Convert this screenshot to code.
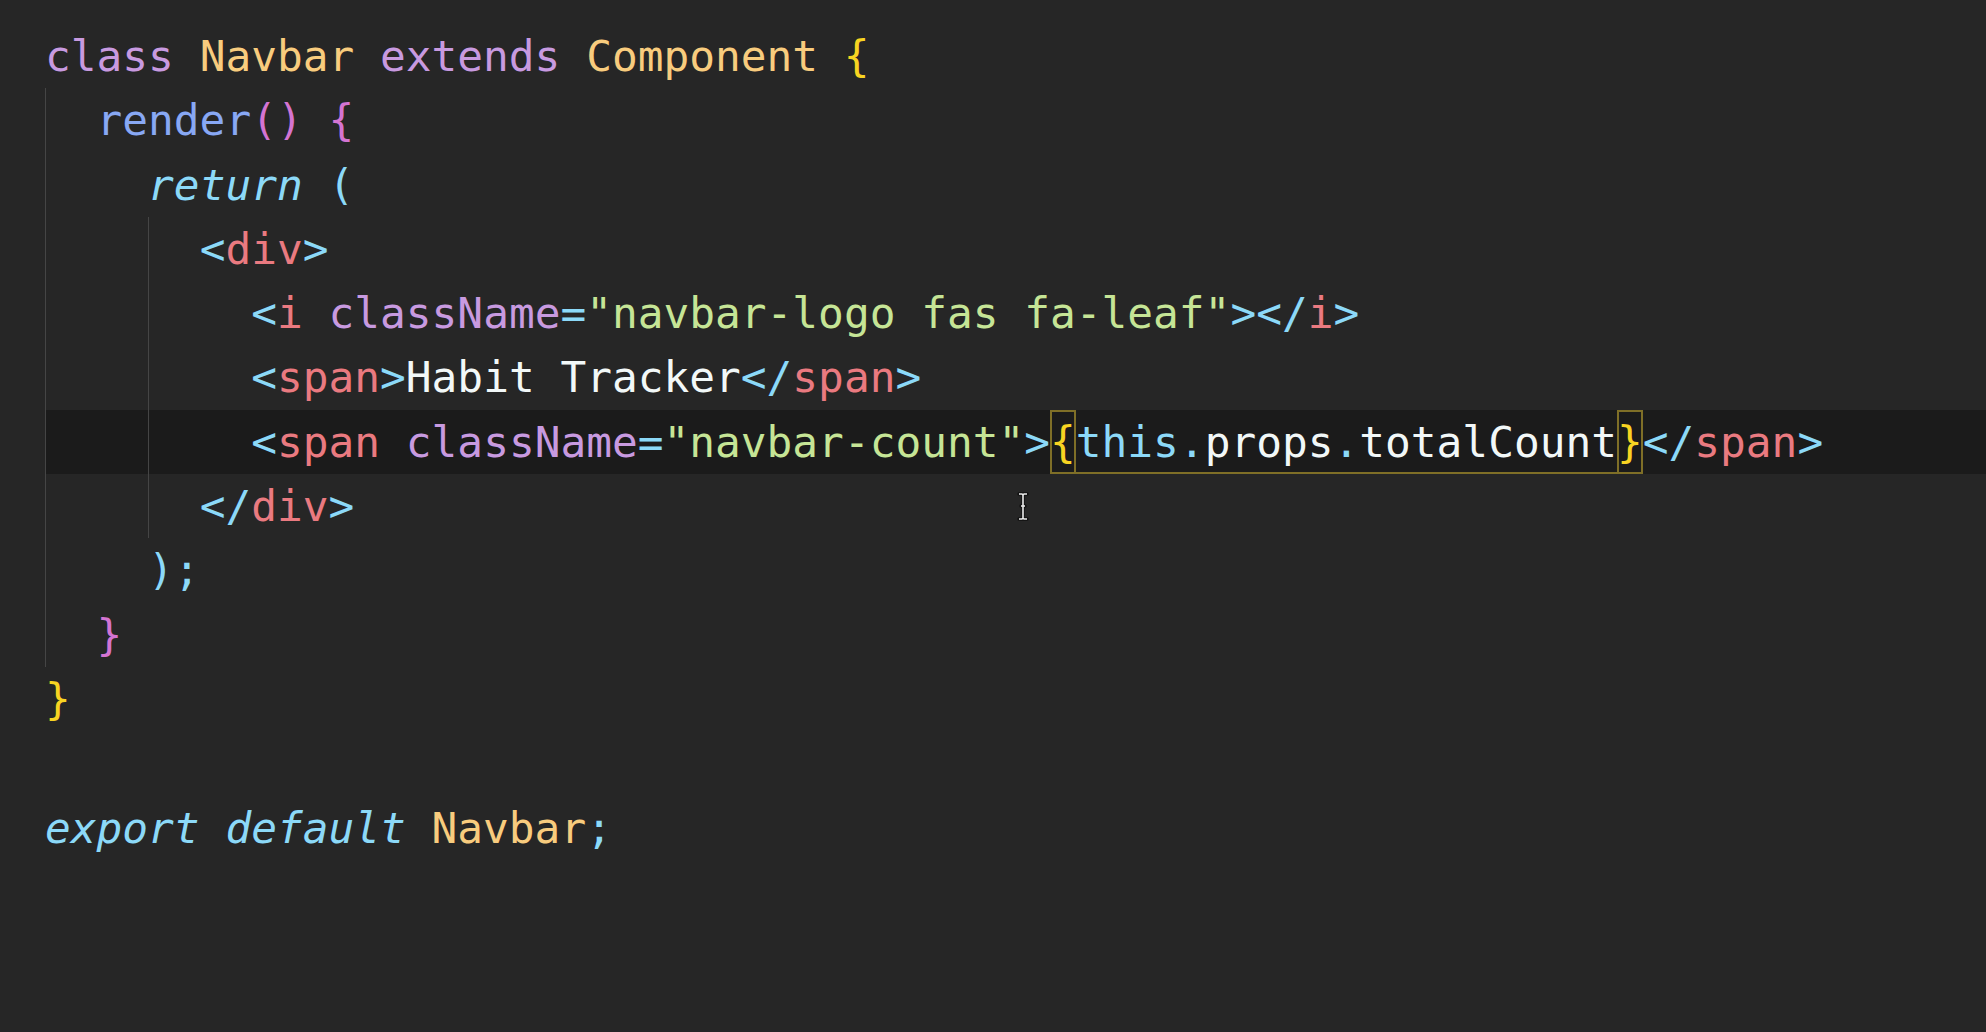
import type { ReactNode } from "react";

const tone = {
  kw: "text-[#c89ae0]",
  cls: "text-[#f8cc7e]",
  b1: "text-[#f8d422]",
  b2: "text-[#d474d2]",
  b3: "text-[#8cd9f8]",
  fn: "text-[#88a8f4]",
  ctl: "text-[#8cd9f8] italic",
  tag: "text-[#ea7a80]",
  punc: "text-[#8cd9f8]",
  attr: "text-[#c89ae0]",
  str: "text-[#c6e596]",
  txt: "text-[#f2f8f8]",
};

type Tone = keyof typeof tone;

function T({ k, children }: { k: Tone; children: ReactNode }) {
  return <span className={tone[k]}>{children}</span>;
}

// two columns of indentation, optionally carrying an indent guide on its left edge
function Ind({ guide }: { guide?: boolean }) {
  return (
    <span
      className={
        guide
          ? "inline-block h-full align-top shadow-[inset_1px_0_0_#454545]"
          : "inline-block h-full align-top"
      }
    >
      {"  "}
    </span>
  );
}

function Line({ active, children }: { active?: boolean; children?: ReactNode }) {
  return (
    <div
      className={
        active
          ? "h-[64.3px] leading-[64.3px] bg-[#1b1b1b]"
          : "h-[64.3px] leading-[64.3px]"
      }
    >
      {children}
    </div>
  );
}

function Bracket({ children }: { children: ReactNode }) {
  return (
    <span className="inline-block h-full align-top text-[#f8d422] shadow-[inset_0_0_0_2px_#7f6f27]">
      {children}
    </span>
  );
}

function IBeam() {
  return (
    <svg
      className="absolute left-[1016px] top-[491px]"
      width="14"
      height="31"
      viewBox="0 0 14 31"
    >
      <path
        d="M3 3 H6 L7 4 L8 3 H11 M7 4 V27 M5 15 H9 M3 28 H6 L7 27 L8 28 H11"
        stroke="#111"
        strokeWidth="3.4"
        fill="none"
        strokeLinecap="round"
      />
      <path
        d="M3 3 H6 L7 4 L8 3 H11 M7 4 V27 M5 15 H9 M3 28 H6 L7 27 L8 28 H11"
        stroke="#ececec"
        strokeWidth="1.6"
        fill="none"
      />
    </svg>
  );
}

export default function App() {
  return (
    <div className="relative w-[1986px] h-[1032px] overflow-hidden bg-[#262626] pt-[24px] pl-[45px] font-['DejaVu_Sans_Mono',monospace] text-[42.8px] whitespace-pre">
      <Line>
        <T k="kw">class</T> <T k="cls">Navbar</T> <T k="kw">extends</T>{" "}
        <T k="cls">Component</T> <T k="b1">{"{"}</T>
      </Line>
      <Line>
        <Ind guide />
        <T k="fn">render</T>
        <T k="b2">()</T> <T k="b2">{"{"}</T>
      </Line>
      <Line>
        <Ind guide />
        <Ind />
        <T k="ctl">return</T> <T k="b3">(</T>
      </Line>
      <Line>
        <Ind guide />
        <Ind />
        <Ind guide />
        <T k="punc">{"<"}</T>
        <T k="tag">div</T>
        <T k="punc">{">"}</T>
      </Line>
      <Line>
        <Ind guide />
        <Ind />
        <Ind guide />
        <Ind />
        <T k="punc">{"<"}</T>
        <T k="tag">i</T> <T k="attr">className</T>
        <T k="punc">=</T>
        <T k="str">"navbar-logo fas fa-leaf"</T>
        <T k="punc">{"></"}</T>
        <T k="tag">i</T>
        <T k="punc">{">"}</T>
      </Line>
      <Line>
        <Ind guide />
        <Ind />
        <Ind guide />
        <Ind />
        <T k="punc">{"<"}</T>
        <T k="tag">span</T>
        <T k="punc">{">"}</T>
        <T k="txt">Habit Tracker</T>
        <T k="punc">{"</"}</T>
        <T k="tag">span</T>
        <T k="punc">{">"}</T>
      </Line>
      <Line active>
        <Ind guide />
        <Ind />
        <Ind guide />
        <Ind />
        <T k="punc">{"<"}</T>
        <T k="tag">span</T> <T k="attr">className</T>
        <T k="punc">=</T>
        <T k="str">"navbar-count"</T>
        <T k="punc">{">"}</T>
        <span className="inline-block h-full align-top shadow-[inset_0_-2px_0_#7f6f27]">
          <Bracket>{"{"}</Bracket>
          <T k="punc">this</T>
          <T k="punc">.</T>
          <T k="txt">props</T>
          <T k="punc">.</T>
          <T k="txt">totalCount</T>
          <Bracket>{"}"}</Bracket>
        </span>
        <T k="punc">{"</"}</T>
        <T k="tag">span</T>
        <T k="punc">{">"}</T>
      </Line>
      <Line>
        <Ind guide />
        <Ind />
        <Ind guide />
        <T k="punc">{"</"}</T>
        <T k="tag">div</T>
        <T k="punc">{">"}</T>
      </Line>
      <Line>
        <Ind guide />
        <Ind />
        <T k="b3">)</T>
        <T k="punc">;</T>
      </Line>
      <Line>
        <Ind guide />
        <T k="b2">{"}"}</T>
      </Line>
      <Line>
        <T k="b1">{"}"}</T>
      </Line>
      <Line />
      <Line>
        <T k="ctl">export</T> <T k="ctl">default</T> <T k="cls">Navbar</T>
        <T k="punc">;</T>
      </Line>
      <IBeam />
    </div>
  );
}
